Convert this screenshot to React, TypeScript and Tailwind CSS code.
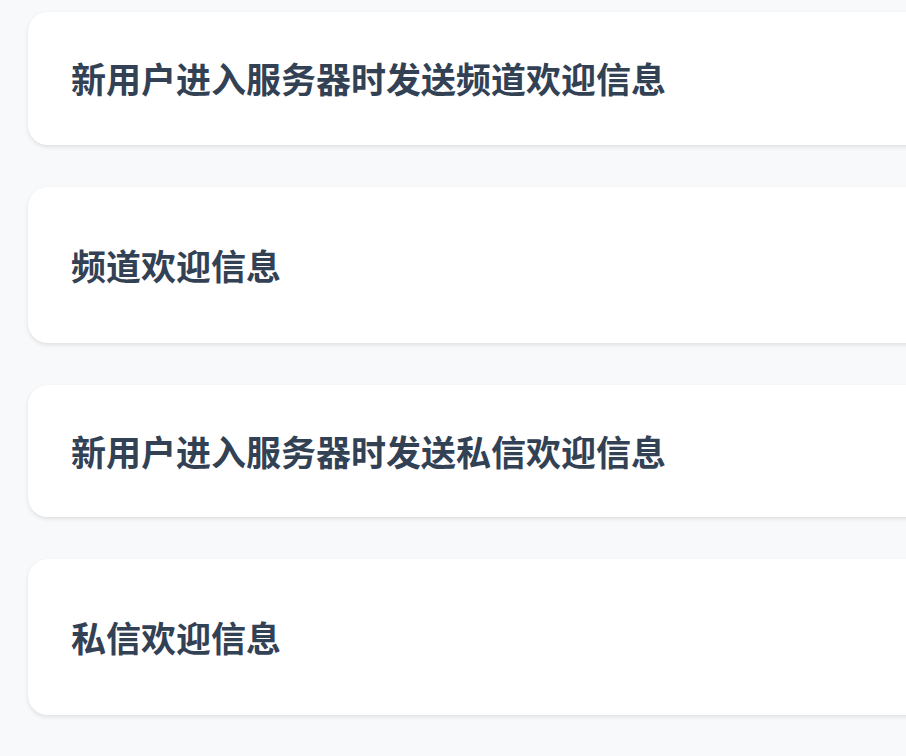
const rows = [
  { label: "新用户进入服务器时发送频道欢迎信息", h: "h-[133px]" },
  { label: "频道欢迎信息", h: "h-[156px]" },
  { label: "新用户进入服务器时发送私信欢迎信息", h: "h-[132px]" },
  { label: "私信欢迎信息", h: "h-[156px]" },
];

export default function App() {
  return (
    <div className="min-h-screen overflow-hidden bg-[#f8f9fb] pl-7 pt-3">
      <div className="flex w-[920px] flex-col gap-[42px]">
        {rows.map((row) => (
          <div
            key={row.label}
            className={`flex ${row.h} items-center rounded-[20px] bg-white pl-[43px] shadow-[0_2px_4px_rgba(0,0,0,0.1)]`}
          >
            <span className="text-[35px] font-semibold text-[#334155] [font-family:'Noto_Sans_CJK_SC',sans-serif]">
              {row.label}
            </span>
          </div>
        ))}
      </div>
    </div>
  );
}
